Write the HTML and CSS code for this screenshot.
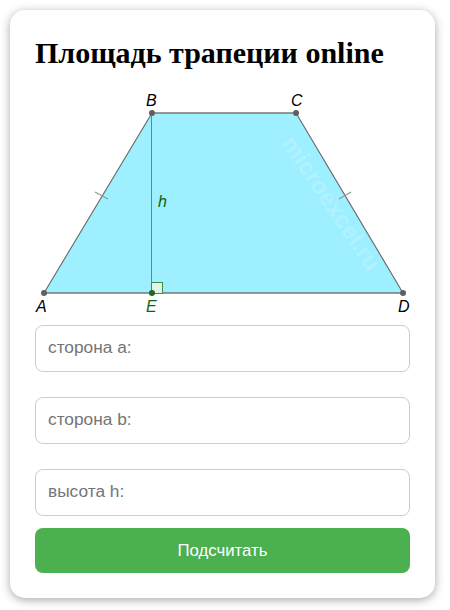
FILE: index.html
```html
<!DOCTYPE html>
<html lang="en">
<head>
    <meta charset="UTF-8">
    <meta name="viewport" content="width=device-width, initial-scale=1.0">
    <title>Площадь трапеции online</title>
    <link rel="stylesheet" href="styles.css">
</head>
<body>
    <div class="card">
        <h1>Площадь трапеции online</h1>

        <svg class="figure" viewBox="35 88 375 230" width="375" height="230">
            <polygon points="44,293 152,113 296,113 403,293" fill="#9eefff"/>
            <line x1="152" y1="113" x2="296" y2="113" stroke="#777" stroke-width="1.6"/>
            <line x1="44" y1="293" x2="403" y2="293" stroke="#777" stroke-width="1.6"/>
            <line x1="44" y1="293" x2="152" y2="113" stroke="#666" stroke-width="1.1"/>
            <line x1="296" y1="113" x2="403" y2="293" stroke="#666" stroke-width="1.1"/>
            <line x1="95" y1="192" x2="108" y2="199" stroke="#999" stroke-width="1.4"/>
            <line x1="339" y1="199" x2="351" y2="192" stroke="#999" stroke-width="1.4"/>
            <line x1="151.5" y1="113" x2="151.5" y2="293" stroke="#4f9a5f" stroke-width="1"/>
            <rect x="151.5" y="282.5" width="11" height="11" fill="#e6f2e8" stroke="#3c8f45" stroke-width="1"/>
            <circle cx="44" cy="293" r="3" fill="#5f5f5f"/>
            <circle cx="152" cy="113" r="3" fill="#5f5f5f"/>
            <circle cx="296" cy="113" r="3" fill="#5f5f5f"/>
            <circle cx="403" cy="293" r="3" fill="#5f5f5f"/>
            <circle cx="152" cy="293" r="3" fill="#1a6b25"/>
            <text class="label" x="146" y="106">B</text>
            <text class="label" x="291" y="106">C</text>
            <text class="label" x="36" y="312">A</text>
            <text class="label" x="398" y="312">D</text>
            <text class="label green" x="146" y="312">E</text>
            <text class="label green" x="158" y="207">h</text>
            <text class="watermark" x="0" y="0" transform="translate(281 143) rotate(56)">microexcel.ru</text>
        </svg>

        <form class="calc">
            <input class="field" type="text" placeholder="сторона a:">
            <input class="field" type="text" placeholder="сторона b:">
            <input class="field" type="text" placeholder="высота h:">
            <button class="submit" type="button">Подсчитать</button>
        </form>
    </div>
</body>
</html>
```

FILE: styles.css
```css
html, body {
    height: 100%;
}
body {
    margin: 0;
    padding: 10px 15px 12px 10px;
    box-sizing: border-box;
    background-color: #fff;
    font-family: "Liberation Sans", Arial, sans-serif;
    overflow: hidden;
}
.card {
    width: 425px;
    height: 588px;
    box-sizing: border-box;
    padding: 25px;
    background-color: #fff;
    border-radius: 15px;
    box-shadow: 0 2px 10px rgba(0, 0, 0, 0.35);
}
h1 {
    margin: 0 0 18px;
    font-family: "Liberation Serif", "Times New Roman", serif;
    font-size: 30px;
    line-height: 35px;
    font-weight: bold;
    color: #000;
}
.figure {
    display: block;
}
.label {
    font-family: "Liberation Sans", Arial, sans-serif;
    font-size: 16px;
    font-style: italic;
    fill: #000;
}
.green {
    fill: #106410;
}
.watermark {
    font-family: "Liberation Sans", Arial, sans-serif;
    font-size: 24px;
    font-weight: bold;
    fill: #fff;
    fill-opacity: 0.2;
}
.calc {
    display: flex;
    flex-direction: column;
    margin-top: 7px;
}
.field {
    height: 47px;
    box-sizing: border-box;
    margin-bottom: 25px;
    padding: 0 12px 2px;
    border: 1px solid #ccc;
    border-radius: 8px;
    font-family: "Liberation Sans", Arial, sans-serif;
    font-size: 17.3px;
    outline: none;
}
.field:nth-of-type(3) {
    margin-bottom: 12px;
}
.submit {
    height: 45px;
    border: none;
    border-radius: 8px;
    background-color: #4caf50;
    color: #fff;
    font-family: "Liberation Sans", Arial, sans-serif;
    font-size: 16.8px;
    cursor: pointer;
}
```
